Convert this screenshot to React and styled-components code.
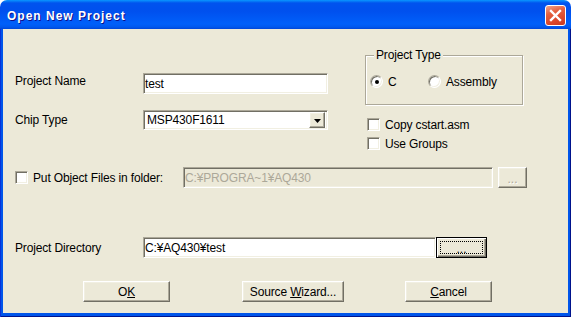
import styled, { createGlobalStyle, css } from "styled-components";

const GlobalStyle = createGlobalStyle`
  html, body {
    margin: 0;
    padding: 0;
    background: #ffffff;
  }
  body {
    font-family: "Liberation Sans", Arial, sans-serif;
    font-size: 12px;
    letter-spacing: -0.15px;
    color: #000;
  }
`;

const sunken = css`
  box-sizing: border-box;
  border: 1px solid;
  border-color: #aca899 #ffffff #ffffff #aca899;
  box-shadow: inset 1px 1px 0 #716f64, inset -1px -1px 0 #f1efe2;
`;

const raised = css`
  box-sizing: border-box;
  border: 1px solid;
  border-color: #ffffff #716f64 #716f64 #ffffff;
  box-shadow: inset -1px -1px 0 #aca899, inset 1px 1px 0 #f1efe2;
  background: #ece9d8;
`;

export default function App() {
  return (
    <>
      <GlobalStyle />
      <Window>
        <TitleBar>
          <Title>Open New Project</Title>
          <CloseButton aria-label="Close">
            <svg width="19" height="19" viewBox="0 0 19 19">
              <path d="M5 5 L14 14 M14 5 L5 14" stroke="#fff" strokeWidth="2.4" strokeLinecap="square" fill="none" />
            </svg>
          </CloseButton>
        </TitleBar>
        <Frame>
          <Body>
            <TopSection>
              <LeftFields>
                <FieldRow>
                  <Label $raise>Project Name</Label>
                  <TextBox $width={185} $height={21} readOnly value="test" />
                </FieldRow>
                <FieldRow>
                  <Label>Chip Type</Label>
                  <Select>
                    <span>MSP430F1611</span>
                    <DropButton>
                      <svg width="7" height="4" viewBox="0 0 7 4">
                        <polygon points="0,0 7,0 3.5,4" fill="#000" />
                      </svg>
                    </DropButton>
                  </Select>
                </FieldRow>
              </LeftFields>
              <RightPanel>
                <GroupBox>
                  <Legend>Project Type</Legend>
                  <RadioRow>
                    <Option $width={58}>
                      <Radio $checked />
                      <span>C</span>
                    </Option>
                    <Option>
                      <Radio />
                      <span>Assembly</span>
                    </Option>
                  </RadioRow>
                </GroupBox>
                <CheckList>
                  <Option>
                    <CheckBox />
                    <span>Copy cstart.asm</span>
                  </Option>
                  <Option>
                    <CheckBox />
                    <span>Use Groups</span>
                  </Option>
                </CheckList>
              </RightPanel>
            </TopSection>

            <FolderRow>
              <FolderToggle>
                <CheckBox />
                <span>Put Object Files in folder:</span>
              </FolderToggle>
              <TextBox $width={310} $height={21} disabled readOnly value="C:¥PROGRA~1¥AQ430" />
              <BrowseButton $width={29} $gap={5} disabled>...</BrowseButton>
            </FolderRow>

            <DirectoryRow>
              <Label>Project Directory</Label>
              <TextBox $width={293} $height={21} readOnly value="C:¥AQ430¥test" />
              <BrowseButton $width={51} $focused>...</BrowseButton>
            </DirectoryRow>

            <ButtonBar>
              <DialogButton $width={87}>O<u>K</u></DialogButton>
              <DialogButton $width={102} $gap={72}>Source <u>W</u>izard...</DialogButton>
              <DialogButton $width={87} $gap={61}><u>C</u>ancel</DialogButton>
            </ButtonBar>
          </Body>
        </Frame>
      </Window>
    </>
  );
}

const Window = styled.div`
  width: 571px;
  height: 317px;
  display: flex;
  flex-direction: column;
`;

const TitleBar = styled.div`
  height: 29px;
  flex-shrink: 0;
  display: flex;
  justify-content: space-between;
  align-items: flex-start;
  padding: 0 5px 0 7px;
  box-sizing: border-box;
  border-radius: 7px 7px 0 0;
  background: linear-gradient(
    180deg,
    #0997ff 0px,
    #0053ee 3px,
    #0050ee 11px,
    #0060fa 24px,
    #0058ee 27px,
    #0046d8 29px
  );
`;

const Title = styled.div`
  margin-top: 9px;
  color: #ffffff;
  font-family: "Liberation Sans", Arial, sans-serif;
  font-weight: bold;
  font-size: 12px;
  line-height: 14px;
  letter-spacing: 1px;
  text-shadow: 1px 1px 0 #0f1089;
`;

const CloseButton = styled.div`
  margin-top: 5px;
  width: 21px;
  height: 21px;
  box-sizing: border-box;
  border: 1px solid #ffffff;
  border-radius: 3px;
  display: flex;
  align-items: center;
  justify-content: center;
  background: linear-gradient(160deg, #f0a48c 0%, #e4603f 35%, #d9452a 75%, #c63a20 100%);
`;

const Frame = styled.div`
  flex: 1;
  display: flex;
  padding: 0 3px 4px 3px;
  background: #0055ea;
  box-shadow: inset 1px 0 0 #0831d9, inset -1px 0 0 #00138c, inset 0 -1px 0 #00138c;
`;

const Body = styled.div`
  flex: 1;
  display: flex;
  flex-direction: column;
  padding: 0 0 11px 12px;
  background: #ece9d8;
`;

const TopSection = styled.div`
  height: 121px;
  display: flex;
  align-items: flex-start;
`;

const LeftFields = styled.div`
  width: 350px;
  padding-top: 44px;
  display: flex;
  flex-direction: column;
  gap: 16px;
`;

const FieldRow = styled.div`
  display: flex;
  align-items: center;
`;

const Label = styled.div`
  width: 128px;
  flex-shrink: 0;
  white-space: nowrap;
  ${(p) => p.$raise && css`margin-bottom: 6px;`}
`;

const TextBox = styled.input`
  ${sunken};
  width: ${(p) => p.$width}px;
  height: ${(p) => p.$height}px;
  margin: 0;
  padding: 0 1px;
  font-family: inherit;
  font-size: 12px;
  letter-spacing: -0.15px;
  color: #000;
  background: #ffffff;
  outline: none;
  &:disabled {
    background: #ece9d8;
    color: #aca899;
  }
`;

const Select = styled.div`
  ${sunken};
  width: 185px;
  height: 20px;
  display: flex;
  align-items: center;
  justify-content: space-between;
  padding: 2px 2px 2px 3px;
  background: #ffffff;
`;

const DropButton = styled.div`
  ${raised};
  width: 16px;
  height: 16px;
  display: flex;
  align-items: center;
  justify-content: center;
  padding-top: 1px;
`;

const RightPanel = styled.div`
  width: 160px;
  margin-top: 19px;
  display: flex;
  flex-direction: column;
`;

const GroupBox = styled.fieldset`
  margin: 0;
  min-width: 0;
  width: 158px;
  box-sizing: border-box;
  padding: 13px 4px 16px 4px;
  border: 1px solid #aca899;
  box-shadow: inset 1px 1px 0 #ffffff, 1px 1px 0 #ffffff;
`;

const Legend = styled.legend`
  margin-left: 4px;
  padding: 0 2px;
  line-height: 14px;
  background: #ece9d8;
`;

const RadioRow = styled.div`
  display: flex;
  align-items: center;
  height: 13px;
`;

const Option = styled.div`
  display: flex;
  align-items: center;
  gap: 5px;
  height: 13px;
  white-space: nowrap;
  ${(p) => p.$width && css`width: ${p.$width}px;`}
`;

const Radio = styled.span`
  position: relative;
  flex-shrink: 0;
  width: 13px;
  height: 13px;
  box-sizing: border-box;
  border-radius: 50%;
  border: 1px solid;
  border-color: #aca899 #ffffff #ffffff #aca899;
  box-shadow: inset 1px 1px 0 #716f64, inset -1px -1px 0 #f1efe2;
  background: #ffffff;
  ${(p) =>
    p.$checked &&
    css`
      &::after {
        content: "";
        position: absolute;
        left: 3.5px;
        top: 3.5px;
        width: 4px;
        height: 4px;
        border-radius: 50%;
        background: #000;
      }
    `}
`;

const CheckList = styled.div`
  margin: 13px 0 0 2px;
  display: flex;
  flex-direction: column;
  gap: 6px;
`;

const CheckBox = styled.span`
  ${sunken};
  flex-shrink: 0;
  width: 13px;
  height: 13px;
  background: #ffffff;
`;

const FolderRow = styled.div`
  margin-top: 17px;
  height: 21px;
  display: flex;
  align-items: center;
`;

const FolderToggle = styled.div`
  width: 168px;
  flex-shrink: 0;
  display: flex;
  align-items: center;
  gap: 5px;
  white-space: nowrap;
`;

const BrowseButton = styled.button`
  ${raised};
  position: relative;
  width: ${(p) => p.$width}px;
  height: 21px;
  margin: 0 0 0 ${(p) => p.$gap || 0}px;
  padding: 2px 0 0 0;
  font-family: inherit;
  font-size: 12px;
  line-height: 12px;
  color: #000;
  &:disabled {
    color: #aca899;
    text-shadow: 1px 1px 0 #ffffff;
  }
  ${(p) =>
    p.$focused &&
    css`
      border: 1px solid #000;
      box-shadow: inset 1px 1px 0 #ffffff, inset -1px -1px 0 #716f64, inset -2px -2px 0 #aca899;
      &::after {
        content: "";
        position: absolute;
        inset: 3px;
        border: 1px dotted #000;
      }
    `}
`;

const DirectoryRow = styled.div`
  margin-top: 49px;
  height: 21px;
  display: flex;
  align-items: center;
`;

const ButtonBar = styled.div`
  margin-top: 23px;
  padding-left: 68px;
  display: flex;
`;

const DialogButton = styled.button`
  ${raised};
  width: ${(p) => p.$width}px;
  height: 21px;
  margin: 0 0 0 ${(p) => p.$gap || 0}px;
  padding: 0;
  font-family: inherit;
  font-size: 12px;
  letter-spacing: -0.15px;
  color: #000;
  u {
    text-underline-offset: 1px;
  }
`;
